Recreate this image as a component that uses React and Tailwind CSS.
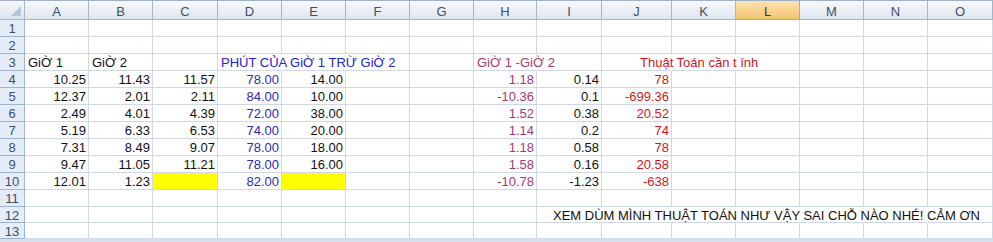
import React from 'react';

const COLS = ['A', 'B', 'C', 'D', 'E', 'F', 'G', 'H', 'I', 'J', 'K', 'L', 'M', 'N', 'O'];
const WIDTHS = [64, 64, 65, 64, 64, 64, 64, 63, 65, 70, 64, 64, 64, 64, 65];

const BLACK = 'text-[#111]';
const BLUE = 'text-[#2a2ab4]';
const BLUE_HEAD = 'text-[#2222cc]';
const PLUM = 'text-[#a23a6e]';
const RED = 'text-[#d2141e]';

// cells: { col: [text, colorClass, align, extra] }
// spill: cells whose right gridline is hidden by text running over it
const rows = [
  { n: 1, h: 17, cells: {} },
  { n: 2, h: 17, cells: {} },
  {
    n: 3,
    h: 17,
    spill: ['D', 'E', 'H', 'J', 'K'],
    cells: {
      A: ['GiỜ 1', BLACK, 'left'],
      B: ['GiỜ 2', BLACK, 'left'],
      D: ['PHÚT CỦA GiỜ 1 TRỪ GiỜ 2', BLUE_HEAD, 'left'],
      H: ['GiỜ 1 -GiỜ 2', PLUM, 'left'],
      J: ['Thuật Toán cần t ính', RED, 'left', 'pl-[38px]'],
    },
  },
  { n: 4, h: 17, cells: { A: ['10.25'], B: ['11.43'], C: ['11.57'], D: ['78.00', BLUE], E: ['14.00'], H: ['1.18', PLUM], I: ['0.14'], J: ['78', RED] } },
  { n: 5, h: 17, cells: { A: ['12.37'], B: ['2.01'], C: ['2.11'], D: ['84.00', BLUE], E: ['10.00'], H: ['-10.36', PLUM], I: ['0.1'], J: ['-699.36', RED] } },
  { n: 6, h: 17, cells: { A: ['2.49'], B: ['4.01'], C: ['4.39'], D: ['72.00', BLUE], E: ['38.00'], H: ['1.52', PLUM], I: ['0.38'], J: ['20.52', RED] } },
  { n: 7, h: 17, cells: { A: ['5.19'], B: ['6.33'], C: ['6.53'], D: ['74.00', BLUE], E: ['20.00'], H: ['1.14', PLUM], I: ['0.2'], J: ['74', RED] } },
  { n: 8, h: 17, cells: { A: ['7.31'], B: ['8.49'], C: ['9.07'], D: ['78.00', BLUE], E: ['18.00'], H: ['1.18', PLUM], I: ['0.58'], J: ['78', RED] } },
  { n: 9, h: 17, cells: { A: ['9.47'], B: ['11.05'], C: ['11.21'], D: ['78.00', BLUE], E: ['16.00'], H: ['1.58', PLUM], I: ['0.16'], J: ['20.58', RED] } },
  { n: 10, h: 17, cells: { A: ['12.01'], B: ['1.23'], C: ['', BLACK, 'right', 'bg-[#ffff00]'], D: ['82.00', BLUE], E: ['', BLACK, 'right', 'bg-[#ffff00]'], H: ['-10.78', PLUM], I: ['-1.23'], J: ['-638', RED] } },
  { n: 11, h: 17, cells: {} },
  {
    n: 12,
    h: 16,
    spill: ['I', 'J', 'K', 'L', 'M', 'N'],
    cells: { I: ['XEM DÙM MÌNH THUẬT TOÁN NHƯ VẬY SAI CHỖ NÀO NHÉ! CẢM ƠN', BLACK, 'left', 'pl-[16px]'] },
  },
  { n: 13, h: 16, cells: {} },
];

const Cell = ({ width, data, spill }) => {
  const [text, color = BLACK, align = 'right', extra = ''] = data || [];
  const alignCls = align === 'left' ? 'justify-start pl-[3px]' : 'justify-end pr-[2px]';
  const border = spill ? 'border-r-transparent' : '';
  return (
    <div
      className={`relative flex items-start shrink-0 h-full border-r border-b border-[#d0d7e5] overflow-visible whitespace-nowrap ${border} ${alignCls} ${color} ${extra}`}
      style={{ width }}
    >
      {text && <span className="relative z-10 block leading-[17px]">{text}</span>}
    </div>
  );
};

export default function App() {
  return (
    <div
      className="w-[993px] h-[242px] bg-white overflow-hidden text-[13px]"
      style={{ fontFamily: '"Liberation Sans", Arial, sans-serif' }}
    >
      <div className="h-[1px] bg-[#9fb1c8]" />
      {/* Column header row */}
      <div className="flex h-[19px]">
        <div className="relative w-[25px] shrink-0 h-full border-r border-b border-[#9eb6ce] bg-gradient-to-b from-[#f3f6fa] to-[#dde5f0]">
          <svg className="absolute right-[3px] bottom-[3px]" width="10" height="10" viewBox="0 0 10 10">
            <polygon points="10,0 10,10 0,10" fill="#b4c6dc" />
          </svg>
        </div>
        {COLS.map((c, i) => (
          <div
            key={c}
            className={`flex items-start justify-center pt-[4px] shrink-0 h-full border-r border-b leading-[14px] ${
              c === 'L'
                ? 'bg-gradient-to-b from-[#fbe3b4] to-[#f2c46c] border-[#d8a85a] text-[#3a3a3a]'
                : 'bg-gradient-to-b from-[#f7f9fc] to-[#dfe6ef] border-[#9eb6ce] text-[#3f4f66]'
            }`}
            style={{ width: WIDTHS[i] }}
          >
            {c}
          </div>
        ))}
      </div>
      {/* Body rows */}
      {rows.map((r) => (
        <div key={r.n} className="flex" style={{ height: r.h }}>
          <div className="flex items-start justify-center pt-[1px] w-[25px] shrink-0 h-full bg-[#e4ecf7] border-r border-b border-[#9eb6ce] text-[#3f4f66] leading-[15px]">
            {r.n}
          </div>
          {COLS.map((c, i) => (
            <Cell key={c} width={WIDTHS[i]} data={r.cells[c]} spill={r.spill?.includes(c)} />
          ))}
        </div>
      ))}
      <div className="h-[3px] bg-[#d6e0ec]" />
    </div>
  );
}
